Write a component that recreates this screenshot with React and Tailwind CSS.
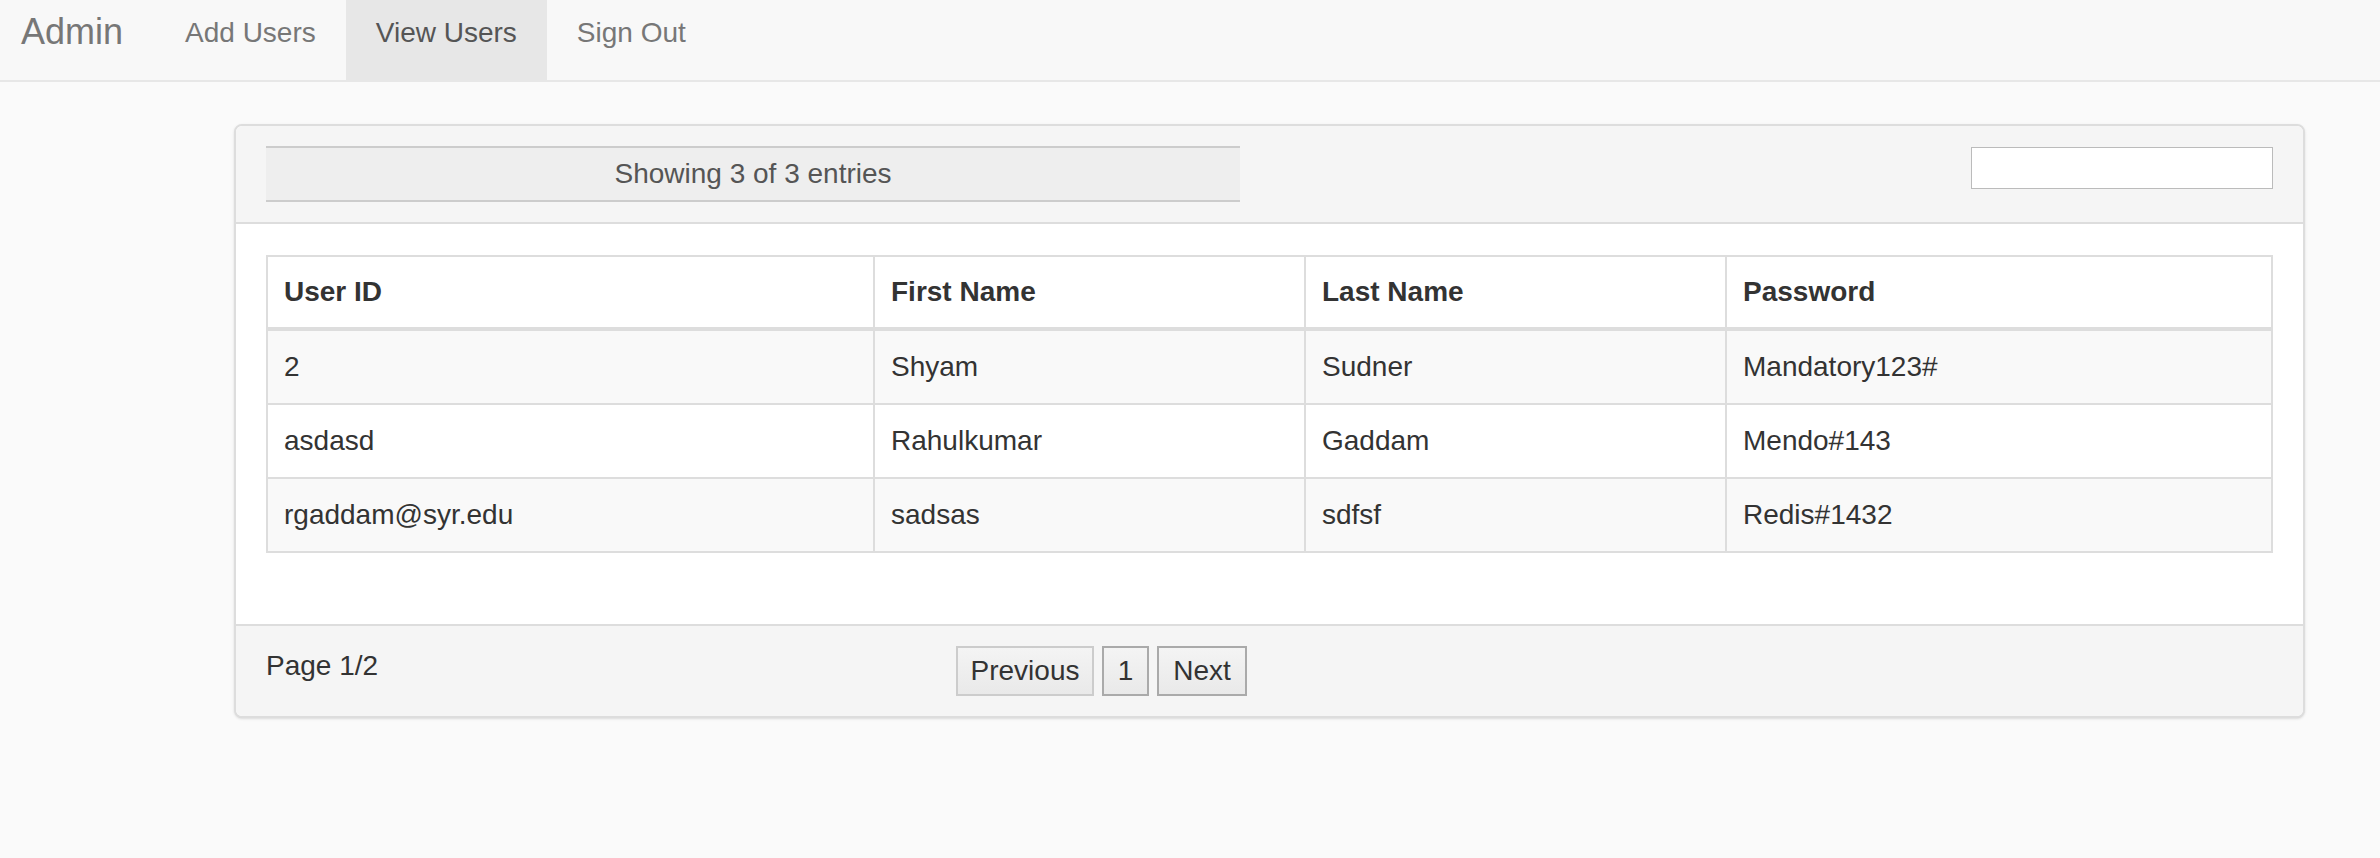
const users = [
    { id: '2', first: 'Shyam', last: 'Sudner', password: 'Mandatory123#' },
    { id: 'asdasd', first: 'Rahulkumar', last: 'Gaddam', password: 'Mendo#143' },
    { id: 'rgaddam@syr.edu', first: 'sadsas', last: 'sdfsf', password: 'Redis#1432' },
];

const App = () => {
    return (
        <div className="min-h-screen bg-[#fafafa] font-['Liberation_Sans',Arial,sans-serif]">
            {/* navbar */}
            <nav className="flex h-[82px] bg-[#f8f8f8] border-b-2 border-[#e7e7e7]">
                <div className="pl-[21px] pr-[32px] pt-[8px] text-[36px] leading-[48px] text-[#777]">Admin</div>
                <a className="px-[30px] pt-[13px] text-[28px] leading-[40px] text-[#777]">Add Users</a>
                <a className="px-[30px] pt-[13px] text-[28px] leading-[40px] text-[#555] bg-[#e7e7e7]">View Users</a>
                <a className="px-[30px] pt-[13px] text-[28px] leading-[40px] text-[#777]">Sign Out</a>
            </nav>

            <div className="ml-[234px] mt-[42px] w-[2071px] border-2 border-[#ddd] rounded-[8px] bg-white shadow-sm overflow-hidden">
                <div className="flex justify-between items-start px-[30px] py-[20px] bg-[#f5f5f5] border-b-2 border-[#ddd]">
                    <div className="w-[974px] h-[56px] flex items-center justify-center bg-[#eee] border-y-2 border-[#ccc] text-[28px] text-[#555]">
                        Showing 3 of 3 entries
                    </div>
                    <input className="mt-px w-[302px] h-[42px] bg-white border border-[#bbb] outline-none" />
                </div>

                <div className="px-[30px] pt-[31px] pb-[71px]">
                    <table className="w-full border-collapse border-2 border-[#ddd] text-[28px] leading-[40px] text-[#333]">
                        <thead>
                            <tr className="bg-white">
                                <th className="w-[607px] border-2 border-b-4 border-[#ddd] px-[16px] py-[15px] text-left font-bold">User ID</th>
                                <th className="w-[431px] border-2 border-b-4 border-[#ddd] px-[16px] py-[15px] text-left font-bold">First Name</th>
                                <th className="w-[421px] border-2 border-b-4 border-[#ddd] px-[16px] py-[15px] text-left font-bold">Last Name</th>
                                <th className="border-2 border-b-4 border-[#ddd] px-[16px] py-[15px] text-left font-bold">Password</th>
                            </tr>
                        </thead>
                        <tbody>
                            {users.map((u, i) => (
                                <tr key={u.id} className={i % 2 === 0 ? 'bg-[#f9f9f9]' : 'bg-white'}>
                                    <td className="border-2 border-[#ddd] px-[16px] py-[16px]">{u.id}</td>
                                    <td className="border-2 border-[#ddd] px-[16px] py-[16px]">{u.first}</td>
                                    <td className="border-2 border-[#ddd] px-[16px] py-[16px]">{u.last}</td>
                                    <td className="border-2 border-[#ddd] px-[16px] py-[16px]">{u.password}</td>
                                </tr>
                            ))}
                        </tbody>
                    </table>
                </div>

                <div className="flex items-start px-[30px] py-[20px] bg-[#f5f5f5] border-t-2 border-[#ddd] text-[28px] text-[#333]">
                    <div className="w-[690px] leading-[40px]">Page 1/2</div>
                    <div className="flex gap-[8px]">
                        <button className="w-[138px] h-[50px] border-2 border-[#ccc] bg-gradient-to-b from-[#f4f4f4] to-[#e9e9e9] leading-[46px]">Previous</button>
                        <button className="w-[47px] h-[50px] border-2 border-[#aaa] bg-gradient-to-b from-[#f4f4f4] to-[#e9e9e9] leading-[46px]">1</button>
                        <button className="w-[90px] h-[50px] border-2 border-[#aaa] bg-gradient-to-b from-[#f4f4f4] to-[#e9e9e9] leading-[46px]">Next</button>
                    </div>
                </div>
            </div>
        </div>
    );
};

export default App;
